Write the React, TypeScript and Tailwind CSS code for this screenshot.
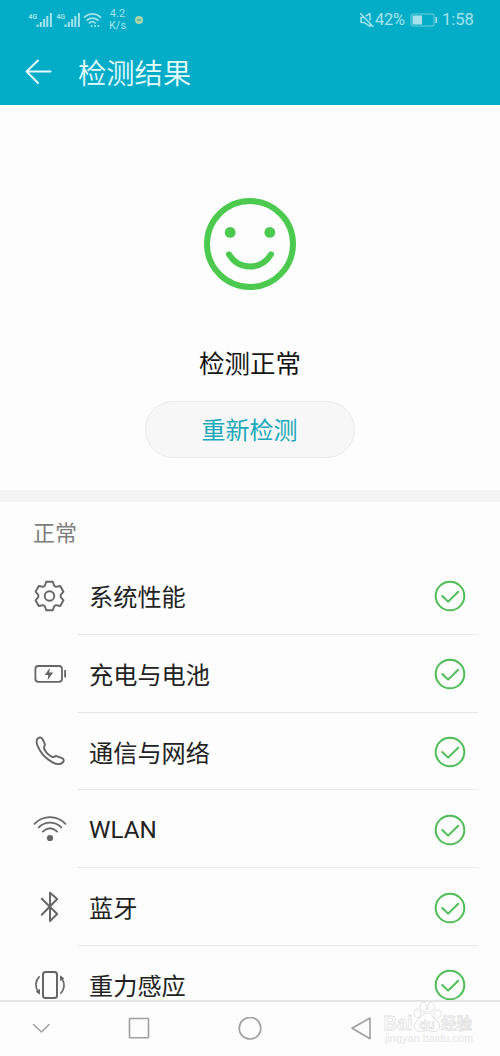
import React from "react";

const s = { fill: "none", stroke: "currentColor", strokeLinecap: "round", strokeLinejoin: "round" } as const;

function Signal() {
  return (
    <svg className="h-[18px] w-[25px]" viewBox="0 0 25 18">
      <text x="0.5" y="8" fontSize="8" fontWeight="700" fontFamily="Roboto, sans-serif" fill="currentColor" textLength="8.5" lengthAdjust="spacingAndGlyphs">4G</text>
      <path d="M9.6 13.5v2.5M12.8 11v5M16.1 8v8M19.3 5v11M22.9 2v14" {...s} strokeLinecap="butt" strokeWidth="2" />
    </svg>
  );
}

function Wifi() {
  return (
    <svg className="h-9 w-9" viewBox="-18 -18 36 36" {...s} strokeWidth="1.8">
      <path d="M-15.5-5.2C-6.5-14 6.5-14 15.5-5.2M-11.3-1.7C-4.6-8 4.6-8 11.3-1.7M-7.2 2.6C-2.6-1.6 2.6-1.6 7.2 2.6" />
      <circle cy="9" r="3.1" fill="currentColor" stroke="none" />
    </svg>
  );
}

function Gear() {
  return (
    <svg className="h-9 w-9" viewBox="-17.5 -18 36 36" {...s} strokeWidth="1.9">
      <path d="M-3.3-14.3H3.3L4.6-10.3 6.6-9.1 10.7-10 14-4.3 11.2-1.2V1.2L14 4.3 10.7 10 6.6 9.1 4.6 10.3 3.3 14.3H-3.3L-4.6 10.3-6.6 9.1-10.7 10-14 4.3-11.2 1.2V-1.2L-14-4.3-10.7-10-6.6-9.1-4.6-10.3Z" />
      <circle r="4.8" />
    </svg>
  );
}

function Battery() {
  return (
    <svg className="h-9 w-9" viewBox="-18 -18 36 36" {...s} strokeWidth="1.8">
      <rect x="-14.6" y="-8" width="26.6" height="15.8" rx="3" />
      <path d="M15.1-4v7.5" strokeLinecap="butt" />
      <path d="M-.2-6-5.4 1h3.6L-2.3 5.9 3.2-1.4H-.7Z" fill="currentColor" stroke="none" />
    </svg>
  );
}

function Phone() {
  return (
    <svg className="h-9 w-9" viewBox="-18 -18 36 36" {...s} strokeWidth="1.9">
      <path d="M-12.6-12.2C-11-14.2-8.5-13.8-7.4-11.8L-5.2-7.2C-4.5-5.4-6.7-4.2-5.9-2.3-4.6.7-1.3 4.3 2 5.9 3.9 6.8 4.7 4.6 6.6 5.1L12 7.2C13.9 8 14.3 10 13 11.2 10.3 13.8 6.6 13.6 2.5 11.3-4.2 7.7-9.8 1.5-12.5-5.3-13.5-8-14-10.4-12.6-12.2Z" />
    </svg>
  );
}

function Bluetooth() {
  return (
    <svg className="h-9 w-9" viewBox="-18 -18 36 36" {...s} strokeWidth="2">
      <path d="M-8.2-8.2 7.2 7 0 14.1V-14.3L7.2-8-8.2 7.8" />
    </svg>
  );
}

function Gravity() {
  return (
    <svg className="h-9 w-9" viewBox="-18 -18 36 36" {...s} strokeWidth="2">
      <rect x="-7" y="-13.1" width="14" height="26" rx="2.5" />
      <path d="M-10.9-8.2C-14.8-4.2-15 1.8-12 6.3M10.9 8.2C14.8 4.2 15-1.8 12-6.3" strokeWidth="1.7" />
      <path d="M-14.3 6.8-10.1 3.7-9.9 9.8ZM14.3-6.8 10.1-3.7 9.9-9.8Z" fill="currentColor" stroke="none" />
    </svg>
  );
}

function Check() {
  return (
    <svg className="relative top-px h-8 w-8 text-[#4fbd57]" viewBox="-16 -16 32 32" {...s} strokeWidth="2">
      <circle r="14.3" />
      <path d="M-7.7 0-1.9 5.6 8.2-4.2" />
    </svg>
  );
}

const rows = [
  { label: "系统性能", icon: <Gear /> },
  { label: "充电与电池", icon: <Battery /> },
  { label: "通信与网络", icon: <Phone /> },
  { label: "WLAN", icon: <Wifi /> },
  { label: "蓝牙", icon: <Bluetooth /> },
  { label: "重力感应", icon: <Gravity /> },
];

function StatusBar() {
  return (
    <div className="flex h-[39px] items-center pl-7 pr-[26px] text-[#a5e2ec]">
      <Signal />
      <span className="w-[3px]" />
      <Signal />
      <svg className="ml-[2px] h-4 w-[19px]" viewBox="0 0 19 16" {...s} strokeWidth="1.7">
        <path d="M1.5 5.2C6 .8 13 .8 17.5 5.2M4 8.2C7 5.4 12 5.4 15 8.2M6.5 11C8.3 9.4 10.5 9.4 12.2 11" />
        <path d="M8.5 14h.1M12 14h.1M15.5 14h.1" strokeWidth="1.9" />
      </svg>
      <div className="ml-[6px] w-[19px] text-center text-[11px] leading-[12px]">
        <div>4.2</div>
        <div>K/s</div>
      </div>
      <div className="ml-[8px] flex h-2 w-2 items-center justify-center rounded-full bg-[#a9d8ae]">
        <div className="h-[2px] w-1 bg-[#70b78b]" />
      </div>
      <svg className="ml-auto h-4 w-4" viewBox="0 0 16 16" {...s} strokeWidth="1.5">
        <path d="M1.5 1.5 14 14.5M5 5.5H2v5h3.2L11 14.5V11.5M7 3.8 11 1.5V8" />
      </svg>
      <span className="w-[32px] pt-px text-[16.3px] leading-none tracking-[-0.2px]">42%</span>
      <svg className="ml-[3px] h-[14px] w-[28px]" viewBox="0 0 28 14">
        <rect x="1" y="1" width="23" height="12" rx="2" fill="none" stroke="currentColor" strokeWidth="1" opacity=".65" />
        <path d="M2.5 2.5h9.5v9h-9.5z" fill="currentColor" />
        <path d="M26.2 4v6" stroke="currentColor" strokeWidth="1.6" />
      </svg>
      <span className="ml-[4px] w-8 pt-[2px] text-[16.5px] leading-none">1:58</span>
    </div>
  );
}

export default function App() {
  return (
    <div className="flex h-[1056px] w-[500px] flex-col overflow-hidden bg-[#fdfdfd] font-[Roboto,'Noto_Sans_CJK_SC',sans-serif] text-[#222]">
      <header className="h-[105px] shrink-0 bg-[#03adc7]">
        <StatusBar />
        <div className="flex h-[66px] items-center pl-[25px] text-[#e4fafc]">
          <svg className="h-[26px] w-[27px]" viewBox="0 0 27 26" {...s} strokeWidth="2">
            <path d="M25.5 12.5H2M13 1.5 1.6 12.5 13 24" />
          </svg>
          <h1 className="ml-[26px] pt-[6px] text-[28.3px] font-[350] leading-none">检测结果</h1>
        </div>
      </header>

      <section className="flex h-[385px] shrink-0 flex-col items-center pt-[93px]">
        <svg className="h-[92px] w-[92px] text-[#4cc94f]" viewBox="-46 -46 92 92" {...s} strokeWidth="6">
          <circle r="43" />
          <circle cx="-19.8" cy="-11.6" r="5.4" fill="currentColor" stroke="none" />
          <circle cx="19.8" cy="-11.6" r="5.4" fill="currentColor" stroke="none" />
          <path d="M-21 10.3C-11.5 26.5 11.5 26.5 21 10.3" />
        </svg>
        <div className="mt-[54px] flex h-[38px] items-center pt-1 text-[25.5px] leading-none text-[#151515]">检测正常</div>
        <button className="mt-[19px] flex h-[57px] w-[210px] items-center justify-center rounded-full border border-[#e9e9e9] bg-[#f7f7f7] pt-[3px] pr-[1px] text-[24px] leading-none text-[#1ba9b9]">
          重新检测
        </button>
      </section>

      <div className="h-[12px] shrink-0 bg-[#f3f3f3]" />

      <section className="flex min-h-0 flex-1 flex-col overflow-hidden">
        <h2 className="flex h-[60px] shrink-0 items-center pl-[33px] pt-[3px] text-[22px] leading-none text-[#7d7d7d]">正常</h2>
        <ul className="-mt-[5px]">
          {rows.map((r) => (
            <li key={r.label} className="flex h-[77.8px] items-center pl-8">
              <span className="text-[#666]">{r.icon}</span>
              <div className="ml-[10px] mr-[22px] flex h-full flex-1 items-center justify-between border-b border-[#e8e8e8] pl-[11px] pr-[12px]">
                <span className={r.label === "WLAN" ? "pt-[3px] text-[24.2px] leading-none" : "pt-[6px] text-[24.2px] leading-none"}>{r.label}</span>
                <Check />
              </div>
            </li>
          ))}
        </ul>
      </section>

      <nav className="relative flex h-[56px] shrink-0 items-center border-t-2 border-[#e6e6e6] bg-[#fdfdfd] text-[#a0a0a0]">
        <svg className="ml-[32px] h-5 w-[18px]" viewBox="0 0 18 20" {...s} strokeWidth="1.6"><path d="M1.5 5.5 9.5 13 17 5.5" /></svg>
        <svg className="ml-[77px] h-6 w-6" viewBox="0 0 24 24" {...s} strokeWidth="1.6"><rect x="2.5" y="1.5" width="19" height="19.3" rx=".5" /></svg>
        <svg className="ml-[87px] h-6 w-6" viewBox="0 0 24 24" {...s} strokeWidth="1.6"><circle cx="12" cy="11.2" r="10.8" /></svg>
        <svg className="ml-[88px] h-6 w-6" viewBox="0 0 24 24" {...s} strokeWidth="1.6"><path d="M20 1V21.7L2 11.2Z" /></svg>
        <svg className="absolute left-[380px] top-[-4px] h-[50px] w-[100px]" viewBox="0 0 100 50" fontFamily="Liberation Sans, Noto Sans CJK SC, sans-serif">
          <g fill="#fdfdfd" stroke="#e2e2e2" strokeWidth="1">
            <ellipse cx="37.5" cy="15.5" rx="3.3" ry="4.5" transform="rotate(-15 37.5 15.5)" />
            <ellipse cx="43.5" cy="9" rx="3.3" ry="4.8" />
            <ellipse cx="51" cy="9" rx="3.3" ry="4.8" transform="rotate(12 51 9)" />
            <ellipse cx="57.5" cy="16.5" rx="3.3" ry="4.5" transform="rotate(25 57.5 16.5)" />
            <path d="M47 15C42 15 42 19 38 22 32 27 34 33.5 40 33.5 45 32.5 49 32.5 54 33.5 60 33.5 62 27 56 22 52 19 52 15 47 15Z" />
            <g strokeWidth=".8">
              <text x="3.5" y="31.5" fontSize="20" fontWeight="700" textLength="29" lengthAdjust="spacingAndGlyphs">Bai</text>
              <text x="39.5" y="30.5" fontSize="13" fontWeight="700" textLength="15" lengthAdjust="spacingAndGlyphs">du</text>
              <text x="61" y="30.5" fontSize="15.5" fontWeight="500">经验</text>
            </g>
          </g>
          <text x="5" y="43.5" fontSize="10" fill="#e6e6e6" textLength="88" lengthAdjust="spacingAndGlyphs">jingyan.baidu.com</text>
        </svg>
      </nav>
    </div>
  );
}
